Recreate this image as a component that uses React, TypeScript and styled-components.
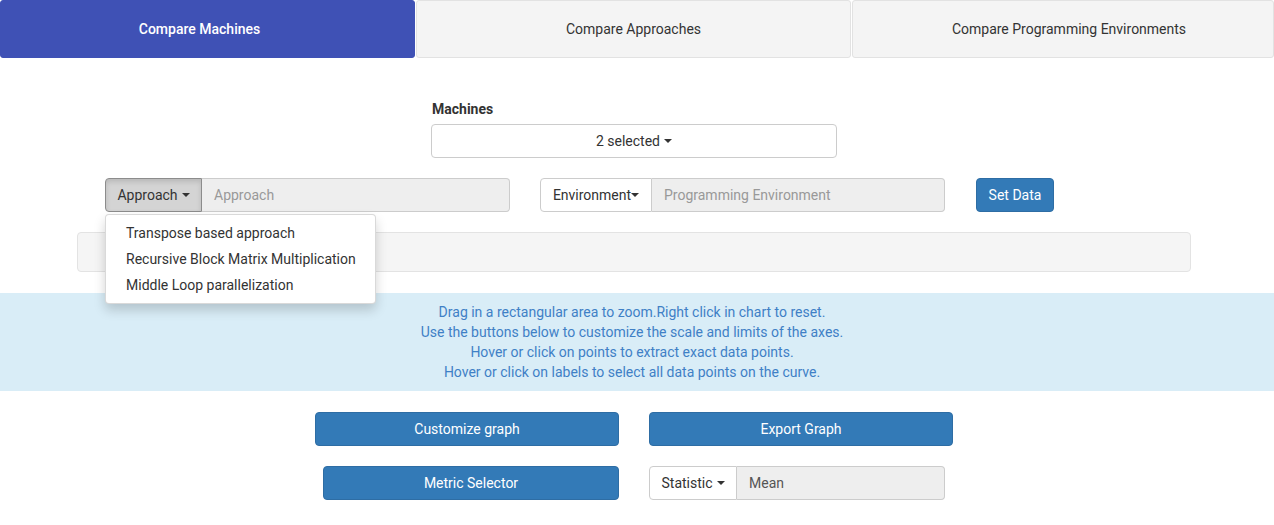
import { FC } from 'react';
import styled, { createGlobalStyle } from 'styled-components';

const GlobalStyle = createGlobalStyle`
  html, body {
    margin: 0;
    padding: 0;
    background: #fff;
  }
  body {
    font-family: Roboto, 'Liberation Sans', sans-serif;
    font-size: 14px;
    line-height: 20px;
    color: #333;
  }
  * {
    box-sizing: border-box;
  }
`;

const Page = styled.div`
  width: 1274px;
  height: 525px;
  overflow: hidden;
`;

const Tabs = styled.div`
  display: grid;
  grid-template-columns: 415px 435px 1fr;
  column-gap: 1px;
  height: 58px;
`;

const Tab = styled.div<{ $active?: boolean; $shift?: number }>`
  display: flex;
  align-items: center;
  justify-content: center;
  padding-left: ${({ $shift }) => ($shift && $shift > 0 ? $shift * 2 : 0)}px;
  padding-right: ${({ $shift }) => ($shift && $shift < 0 ? -$shift * 2 : 0)}px;
  border-radius: 3px;
  border: 1px solid ${({ $active }) => ($active ? '#3f51b5' : '#e2e2e2')};
  background-color: ${({ $active }) => ($active ? '#3f51b5' : '#f4f4f4')};
  color: ${({ $active }) => ($active ? '#fff' : '#333')};
  font-weight: ${({ $active }) => ($active ? 500 : 400)};
`;

const MachinesBlock = styled.div`
  width: 406px;
  margin: 41px 0 0 431px;
`;

const Label = styled.div`
  font-weight: 700;
  margin-left: 1px;
  margin-bottom: 5px;
  line-height: 20px;
`;

const SelectButton = styled.div`
  display: flex;
  align-items: center;
  justify-content: center;
  height: 34px;
  border: 1px solid #ccc;
  border-radius: 4px;
  background: #fff;
`;

const Caret = styled.span<{ $gap?: number }>`
  display: inline-block;
  width: 0;
  height: 0;
  margin-left: ${({ $gap }) => $gap ?? 4}px;
  border-top: 4px solid #333;
  border-left: 4px solid transparent;
  border-right: 4px solid transparent;
  vertical-align: middle;
`;

const FilterRow = styled.div`
  display: flex;
  align-items: center;
  margin: 20px 0 0 105px;
`;

const InputGroup = styled.div<{ $width: number; $gapBefore?: number }>`
  position: relative;
  display: flex;
  width: ${({ $width }) => $width}px;
  height: 34px;
  margin-left: ${({ $gapBefore }) => $gapBefore ?? 0}px;
`;

const AddonButton = styled.div<{ $pressed?: boolean; $width: number }>`
  display: flex;
  align-items: center;
  justify-content: center;
  flex: 0 0 ${({ $width }) => $width}px;
  border: 1px solid ${({ $pressed }) => ($pressed ? '#8c8c8c' : '#ccc')};
  border-radius: 4px 0 0 4px;
  background: ${({ $pressed }) => ($pressed ? '#d4d4d4' : '#fff')};
  box-shadow: ${({ $pressed }) => ($pressed ? 'inset 0 3px 5px rgba(0,0,0,0.125)' : 'none')};
  color: #333;
`;

const ReadonlyInput = styled.div<{ $placeholder?: boolean }>`
  flex: 1;
  display: flex;
  align-items: center;
  padding: 0 12px;
  border: 1px solid #ccc;
  border-left: none;
  border-radius: 0 4px 4px 0;
  background: #eee;
  color: ${({ $placeholder }) => ($placeholder ? '#999' : '#555')};
`;

const PrimaryButton = styled.div<{ $width: number; $gapBefore?: number }>`
  display: flex;
  align-items: center;
  justify-content: center;
  width: ${({ $width }) => $width}px;
  height: 34px;
  margin-left: ${({ $gapBefore }) => $gapBefore ?? 0}px;
  border: 1px solid #2e6da4;
  border-radius: 4px;
  background: #337ab7;
  color: #fff;
`;

const Menu = styled.ul`
  position: absolute;
  top: 36px;
  left: 0;
  z-index: 10;
  width: 271px;
  margin: 0;
  padding: 5px 0;
  list-style: none;
  background: #fff;
  border: 1px solid rgba(0, 0, 0, 0.15);
  border-radius: 4px;
  box-shadow: 0 6px 12px rgba(0, 0, 0, 0.175);
`;

const MenuItem = styled.li`
  padding: 3px 20px;
  line-height: 20px;
  color: #333;
  white-space: nowrap;
`;

const Well = styled.div`
  height: 40px;
  margin: 20px 83px 0 77px;
  background: #f5f5f5;
  border: 1px solid #e3e3e3;
  border-radius: 4px;
`;

const InfoBand = styled.div`
  margin-top: 21px;
  padding: 9px 10px 9px 0;
  background: #d9edf7;
  color: #3f80c6;
  text-align: center;
  line-height: 20px;
`;

const ActionGrid = styled.div`
  display: grid;
  grid-template-columns: 619px 1fr;
  column-gap: 30px;
  row-gap: 20px;
  margin-top: 21px;
`;

const LeftCell = styled.div`
  justify-self: end;
`;

const RightCell = styled.div`
  justify-self: start;
`;

const approaches = [
  'Transpose based approach',
  'Recursive Block Matrix Multiplication',
  'Middle Loop parallelization',
];

const infoLines = [
  'Drag in a rectangular area to zoom.Right click in chart to reset.',
  'Use the buttons below to customize the scale and limits of the axes.',
  'Hover or click on points to extract exact data points.',
  'Hover or click on labels to select all data points on the curve.',
];

const App: FC = () => (
  <Page>
    <GlobalStyle />
    <Tabs>
      <Tab $active $shift={-8}>
        Compare Machines
      </Tab>
      <Tab>Compare Approaches</Tab>
      <Tab $shift={6}>Compare Programming Environments</Tab>
    </Tabs>

    <MachinesBlock>
      <Label>Machines</Label>
      <SelectButton>
        2 selected
        <Caret />
      </SelectButton>
    </MachinesBlock>

    <FilterRow>
      <InputGroup $width={405}>
        <AddonButton $pressed $width={97}>
          Approach
          <Caret />
        </AddonButton>
        <ReadonlyInput $placeholder>Approach</ReadonlyInput>
        <Menu>
          {approaches.map((item) => (
            <MenuItem key={item}>{item}</MenuItem>
          ))}
        </Menu>
      </InputGroup>
      <InputGroup $width={405} $gapBefore={30}>
        <AddonButton $width={112}>
          Environment
          <Caret $gap={0} />
        </AddonButton>
        <ReadonlyInput $placeholder>Programming Environment</ReadonlyInput>
      </InputGroup>
      <PrimaryButton $width={78} $gapBefore={31}>
        Set Data
      </PrimaryButton>
    </FilterRow>

    <Well />

    <InfoBand>
      {infoLines.map((line) => (
        <div key={line}>{line}</div>
      ))}
    </InfoBand>

    <ActionGrid>
      <LeftCell>
        <PrimaryButton $width={304}>Customize graph</PrimaryButton>
      </LeftCell>
      <RightCell>
        <PrimaryButton $width={304}>Export Graph</PrimaryButton>
      </RightCell>
      <LeftCell>
        <PrimaryButton $width={296}>Metric Selector</PrimaryButton>
      </LeftCell>
      <RightCell>
        <InputGroup $width={296}>
          <AddonButton $width={88}>
            Statistic
            <Caret />
          </AddonButton>
          <ReadonlyInput>Mean</ReadonlyInput>
        </InputGroup>
      </RightCell>
    </ActionGrid>
  </Page>
);

export default App;
